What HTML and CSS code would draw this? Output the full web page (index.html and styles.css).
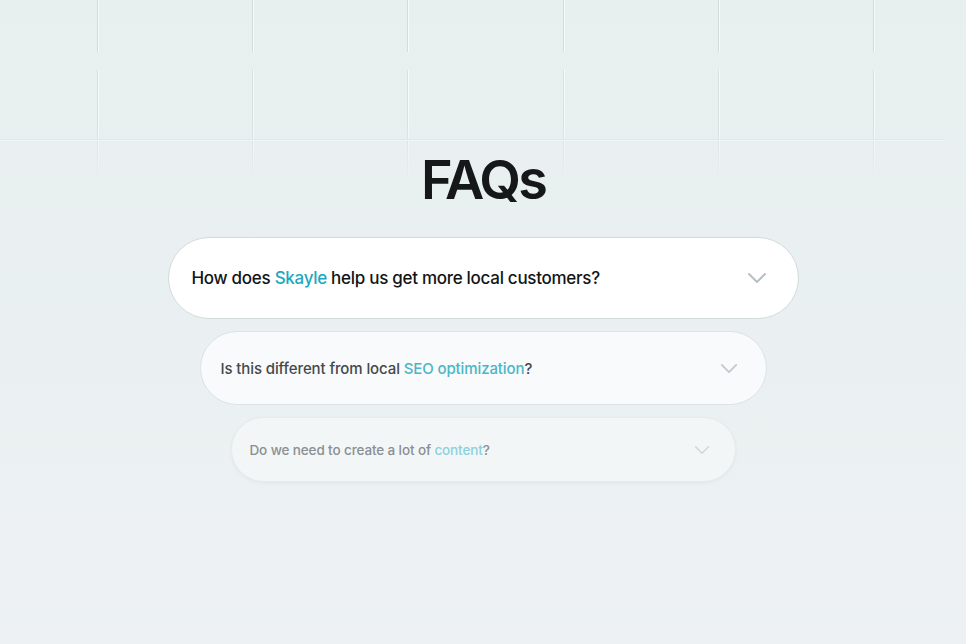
FILE: index.html
```html
<!DOCTYPE html>
<html lang="en">
<head>
<meta charset="utf-8">
<title>FAQs</title>
<link rel="stylesheet" href="styles.css">
</head>
<body>
<main class="page">
  <header class="hero">
    <h1 class="title">FAQs</h1>
  </header>

  <section class="faq-list">
    <button class="faq faq-primary" type="button">
      <span class="faq-q">How does <em class="accent">Skayle</em> help us get more local customers?</span>
      <svg class="chev" viewBox="0 0 20 12" aria-hidden="true"><polyline points="2,2 10,10 18,2"/></svg>
    </button>
    <button class="faq faq-secondary" type="button">
      <span class="faq-q">Is this different from local <em class="accent">SEO optimization</em>?</span>
      <svg class="chev" viewBox="0 0 20 12" aria-hidden="true"><polyline points="2,2 10,10 18,2"/></svg>
    </button>
    <button class="faq faq-tertiary" type="button">
      <span class="faq-q">Do we need to create a lot of <em class="accent">content</em>?</span>
      <svg class="chev" viewBox="0 0 20 12" aria-hidden="true"><polyline points="2,2 10,10 18,2"/></svg>
    </button>
  </section>
</main>
</body>
</html>
```

FILE: styles.css
```css
* { box-sizing: border-box; }

html {
  min-height: 100%;
  background: #eaf0f0;
}

body {
  margin: 0;
  min-height: 100vh;
  background: linear-gradient(180deg, #e8efef 0px, #eaf0f1 320px, #edf1f3 644px);
  font-family: Inter, "Noto Sans", "Liberation Sans", sans-serif;
  color: #111;
}

.page {
  display: flex;
  flex-direction: column;
  align-items: center;
}

/* Header with a faint blueprint grid behind the title */
.hero {
  width: 100%;
  height: 207px;
  display: flex;
  align-items: flex-end;
  justify-content: center;
  background-image:
    linear-gradient(180deg, rgba(233, 240, 240, 0) 125px, rgba(233, 240, 240, 1) 182px),
    linear-gradient(180deg, transparent 139px, #dde4e4 139px, #dde4e4 140px, #f4f8f8 140px, #f4f8f8 141px, transparent 141px),
    repeating-linear-gradient(90deg, transparent 0 97px, #d3dbdb 97px 98px, #f7fafa 98px 99px, transparent 99px 155.2px),
    repeating-linear-gradient(90deg, transparent 0 97px, #d9e0e0 97px 98px, #f5f9f9 98px 99px, transparent 99px 155.2px);
  background-repeat: no-repeat;
  background-size: 100% 100%, 944px 100%, 100% 52px, 100% 112px;
  background-position: 0 0, 0 0, 0 0, 0 70px;
}

.title {
  margin: 0;
  font-size: 54px;
  line-height: 1;
  font-weight: 600;
  letter-spacing: -2.9px;
  color: #151718;
}

.faq-list {
  margin-top: 30px;
  display: flex;
  flex-direction: column;
  align-items: center;
  gap: 12px;
}

.faq {
  display: flex;
  align-items: center;
  justify-content: space-between;
  border-radius: 999px;
  font-family: inherit;
  font-weight: 500;
  text-align: left;
  cursor: pointer;
}

.faq .accent {
  font-style: normal;
}

.chev {
  fill: none;
  stroke-linecap: round;
  stroke-linejoin: round;
  flex: none;
}

.faq-primary {
  width: 631px;
  height: 82px;
  padding: 0 31px 0 23px;
  background: #ffffff;
  border: 1px solid #d3dada;
  font-size: 17px;
  letter-spacing: -0.29px;
  color: #121416;
}
.faq-primary .accent { color: #1ea8bf; }
.faq-primary .chev { width: 20px; height: 12px; stroke: #b9c0c3; stroke-width: 2; }

.faq-secondary {
  width: 567px;
  height: 74px;
  padding: 0 28px 0 20px;
  background: #f8fafb;
  border: 1px solid #dce3e4;
  font-size: 15px;
  letter-spacing: -0.11px;
  color: #45494c;
}
.faq-secondary .accent { color: #4ab6c6; }
.faq-secondary .chev { width: 18px; height: 11px; stroke: #c3c9cc; stroke-width: 2; }

.faq-tertiary {
  width: 505px;
  height: 65px;
  padding: 0 25px 0 18px;
  background: #f3f6f7;
  border: 1px solid #e6ebec;
  box-shadow: 0 1px 3px rgba(150, 165, 170, 0.12);
  font-size: 13.5px;
  letter-spacing: -0.12px;
  color: #8a8f93;
}
.faq-tertiary .accent { color: #8dd1dc; }
.faq-tertiary .chev { width: 16px; height: 10px; stroke: #d0d5d8; stroke-width: 1.8; }
```
